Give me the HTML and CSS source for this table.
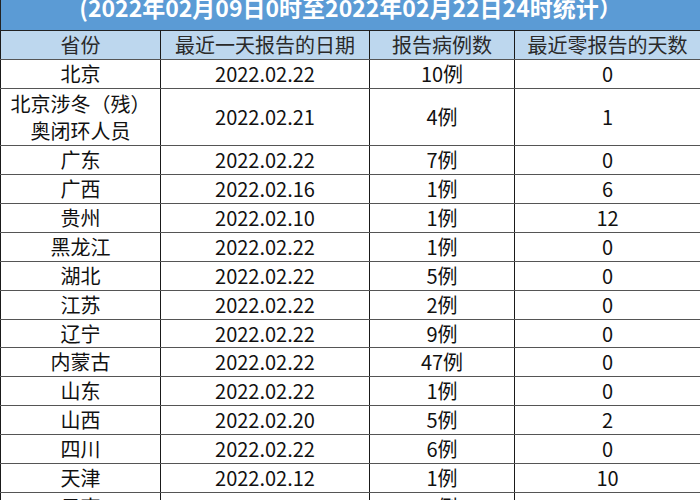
FILE: index.html
```html
<!DOCTYPE html>
<html lang="zh-CN">
<head>
<meta charset="utf-8">
<title>统计表</title>
<link rel="stylesheet" href="styles.css">
</head>
<body>
<div class="title"><span class="title-text">(2022年02月09日0时至2022年02月22日24时统计）</span></div>
<table class="stats">
  <colgroup>
    <col class="c1"><col class="c2"><col class="c3"><col class="c4">
  </colgroup>
  <thead>
    <tr><th>省份</th><th>最近一天报告的日期</th><th>报告病例数</th><th>最近零报告的天数</th></tr>
  </thead>
  <tbody>
    <tr><td>北京</td><td>2022.02.22</td><td>10例</td><td>0</td></tr>
    <tr class="tall"><td class="wrap">北京涉冬（残）<br>奥闭环人员</td><td>2022.02.21</td><td>4例</td><td>1</td></tr>
    <tr><td>广东</td><td>2022.02.22</td><td>7例</td><td>0</td></tr>
    <tr><td>广西</td><td>2022.02.16</td><td>1例</td><td>6</td></tr>
    <tr><td>贵州</td><td>2022.02.10</td><td>1例</td><td>12</td></tr>
    <tr><td>黑龙江</td><td>2022.02.22</td><td>1例</td><td>0</td></tr>
    <tr><td>湖北</td><td>2022.02.22</td><td>5例</td><td>0</td></tr>
    <tr><td>江苏</td><td>2022.02.22</td><td>2例</td><td>0</td></tr>
    <tr><td>辽宁</td><td>2022.02.22</td><td>9例</td><td>0</td></tr>
    <tr><td>内蒙古</td><td>2022.02.22</td><td>47例</td><td>0</td></tr>
    <tr><td>山东</td><td>2022.02.22</td><td>1例</td><td>0</td></tr>
    <tr><td>山西</td><td>2022.02.20</td><td>5例</td><td>2</td></tr>
    <tr><td>四川</td><td>2022.02.22</td><td>6例</td><td>0</td></tr>
    <tr><td>天津</td><td>2022.02.12</td><td>1例</td><td>10</td></tr>
    <tr><td>云南</td><td>2022.02.22</td><td>2例</td><td>0</td></tr>
  </tbody>
</table>
</body>
</html>
```

FILE: styles.css
```css
html, body {
  margin: 0;
  padding: 0;
  background: #ffffff;
}
body {
  font-family: "Noto Sans CJK SC", "Noto Sans", sans-serif;
  color: #111;
  width: 700px;
  overflow: hidden;
}
.title {
  height: 30px;
  background: #5b9bd5;
  border-left: 1px solid #222;
  box-sizing: border-box;
  text-align: center;
  overflow: hidden;
}
.title-text {
  display: block;
  color: #ffffff;
  font-weight: bold;
  font-size: 23px;
  line-height: 14px;
}
.stats {
  width: 700px;
  border-collapse: collapse;
  table-layout: fixed;
  font-size: 20px;
}
.c1 { width: 160px; }
.c2 { width: 209px; }
.c3 { width: 145px; }
.c4 { width: 186px; }
.stats th, .stats td {
  border: 1px solid #1a1a1a;
  border-top-color: #555;
  border-bottom-color: #555;
  padding: 0;
  text-align: center;
  vertical-align: middle;
  height: 27.87px;
  line-height: 26px;
  white-space: nowrap;
}
.stats th {
  background: #bdd7ee;
  font-weight: normal;
  color: #2a2a2a;
  border-top-color: #222;
}
.stats tr.tall td {
  height: 56.74px;
}
.stats td.wrap {
  line-height: 27px;
}
```
